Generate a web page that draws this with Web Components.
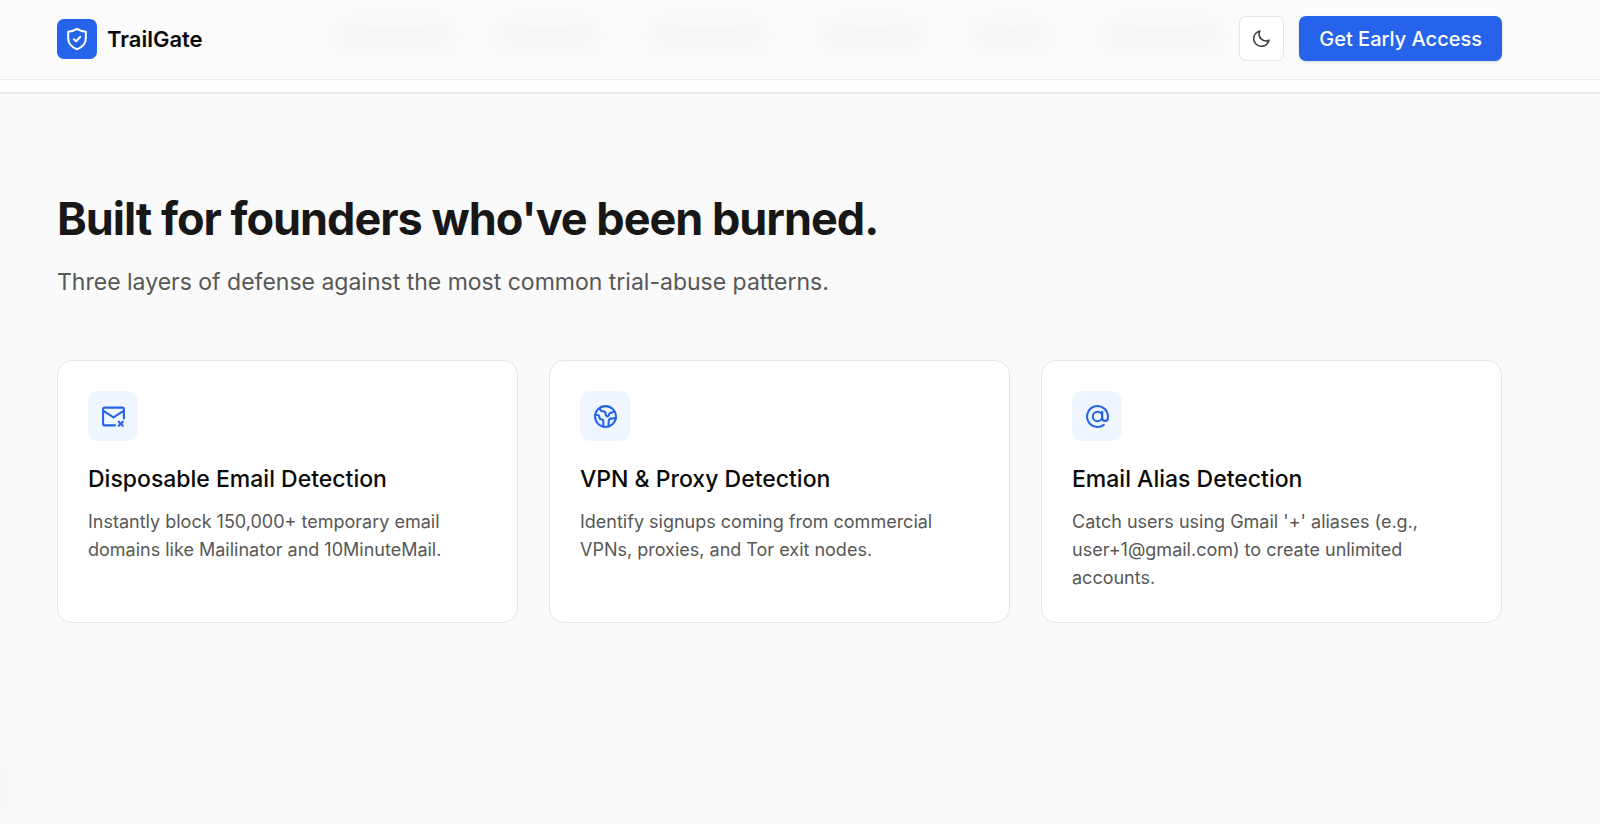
<!DOCTYPE html>
<html lang="en">
<head>
<meta charset="UTF-8">
<meta name="viewport" content="width=device-width, initial-scale=1">
<title>TrailGate</title>
<style>
  :root {
    --accent: #2563eb;
    --ink: #171717;
    --muted: #575757;
    --line: #e5e5e5;
    --page: #fafafa;
    --gutter-left: 57px;
    --gutter-right: 98px;
  }
  body {
    margin: 0;
    min-height: 100vh;
    background: radial-gradient(20px 44px at 0 96%, #f6f6f6, var(--page)) var(--page);
    color: var(--ink);
    font-family: Inter, "Liberation Sans", sans-serif;
  }
</style>
</head>
<body>
  <site-header>
    <span slot="brand">TrailGate</span>
    <span slot="action">Get Early Access</span>
  </site-header>

  <main>
    <feature-section>
      <span slot="heading">Built for founders who've been burned.</span>
      <span slot="lead">Three layers of defense against the most common trial-abuse patterns.</span>

      <feature-card icon="mail">
        <span slot="title">Disposable Email Detection</span>
        Instantly block 150,000+ temporary email domains like Mailinator and 10MinuteMail.
      </feature-card>
      <feature-card icon="globe">
        <span slot="title">VPN &amp; Proxy Detection</span>
        Identify signups coming from commercial VPNs, proxies, and Tor exit nodes.
      </feature-card>
      <feature-card icon="at">
        <span slot="title">Email Alias Detection</span>
        Catch users using Gmail '+' aliases (e.g., user+1@gmail.com) to create unlimited accounts.
      </feature-card>
    </feature-section>
  </main>

<script>
const icons = {
  shield: `
    <path d="M12 1.800C9.700 3.300 7 4.300 3.200 4.700V11.500C3.200 16.800 7.200 20.400 12 22.200C16.800 20.400 20.800 16.800 20.800 11.500V4.700C17 4.300 14.300 3.300 12 1.800Z"/>
    <path d="M8.800 12.300l2.300 2 4.200-4.500"/>`,
  moon: `
    <path d="M21.500 14.100A8.700 8.700 0 0 1 9.900 2.500 9.800 9.800 0 1 0 21.500 14.100Z"/>`,
  mail: `
    <path d="M22 14V5Q22 3.500 20.500 3.500H3.500Q2 3.500 2 5V19Q2 20.500 3.500 20.500H13.500"/>
    <path d="M2.300 6.500L12 12.800L21.700 6.500"/>
    <path d="M17 17l4 4M21 17l-4 4"/>`,
  globe: `
    <circle cx="12" cy="12" r="10"/>
    <path d="M6.500 4c.3 2.300 1.500 3 3 3 2 0 2.700 1 2.700 2.500 0 1.600.8 2.600 2 2.300 1.700-.4.500-2.300 2-3.100 1-.6 2.500-.2 4.300-1.500"/>
    <path d="M2 10.500h1.800c1.400 0 2.200.8 2.200 2 0 1.300.8 2 2 2.100 1.400.2 2 1 1.900 2.400V21.500"/>
    <path d="M21.800 13.800h-3.300c-2 0-3.500 1.300-3.500 3.200V21.500"/>`,
  at: `
    <circle cx="12" cy="12" r="4.500"/>
    <path d="M16.500 7.500V13.500a2.750 2.750 0 0 0 5.500 0V12A10 10 0 1 0 18 20"/>`
};

function icon(name, size) {
  return `<svg viewBox="0 0 24 24" width="${size}" height="${size}" fill="none" stroke="currentColor"
    stroke-width="2" stroke-linecap="round" stroke-linejoin="round" aria-hidden="true">${icons[name]}</svg>`;
}

class SiteHeader extends HTMLElement {
  constructor() {
    super();
    this.attachShadow({ mode: 'open' });
  }

  connectedCallback() {
    this.shadowRoot.innerHTML = `
      <style>
        :host {
          display: block;
          background: #fefefe;
          padding-bottom: 12px;
          border-bottom: 2px solid #ebebeb;
        }
        header {
          position: relative;
          display: flex;
          align-items: center;
          justify-content: space-between;
          padding: 16px var(--gutter-right) 18px var(--gutter-left);
          background: #fbfbfb;
          border-bottom: 1px solid #ebebeb;
        }
        .brand {
          display: flex;
          align-items: center;
          gap: 10px;
          color: #0a0a0a;
          font-size: 22px;
          font-weight: 600;
          text-decoration: none;
        }
        .mark {
          display: grid;
          place-items: center;
          width: 40px;
          height: 40px;
          border-radius: 7px;
          background: var(--accent);
          color: white;
        }
        .actions {
          display: flex;
          gap: 15px;
        }
        button {
          box-sizing: border-box;
          height: 45px;
          border-radius: 7px;
          font: inherit;
          cursor: pointer;
        }
        .theme {
          display: grid;
          place-items: center;
          width: 45px;
          padding: 0;
          border: 1px solid var(--line);
          background: white;
          color: #404040;
        }
        .cta {
          padding: 0 20px;
          border: 0;
          background: var(--accent);
          box-shadow: 0 1px 3px rgba(0, 0, 0, 0.15);
          color: white;
          font-size: 20px;
          font-weight: 500;
        }
        .frost {
          position: absolute;
          inset: 0;
          overflow: hidden;
          pointer-events: none;
        }
        .frost i {
          position: absolute;
          top: 26px;
          height: 18px;
          background: #f3f3f3;
          filter: blur(10px);
        }
        .brand, .actions { position: relative; }
      </style>
      <header>
        <div class="frost" aria-hidden="true">
          <i style="left: 340px; width: 108px"></i>
          <i style="left: 502px; width: 90px"></i>
          <i style="left: 656px; width: 104px"></i>
          <i style="left: 826px; width: 92px"></i>
          <i style="left: 978px; width: 64px"></i>
          <i style="left: 1108px; width: 108px"></i>
        </div>
        <a class="brand" href="#"><span class="mark">${icon('shield', 24)}</span><slot name="brand"></slot></a>
        <div class="actions">
          <button class="theme" type="button" aria-label="Switch to dark theme">${icon('moon', 19)}</button>
          <button class="cta" type="button"><slot name="action"></slot></button>
        </div>
      </header>
    `;
  }
}
customElements.define('site-header', SiteHeader);

class FeatureSection extends HTMLElement {
  constructor() {
    super();
    this.attachShadow({ mode: 'open' });
  }

  connectedCallback() {
    this.shadowRoot.innerHTML = `
      <style>
        :host {
          display: block;
          padding: 100px var(--gutter-right) 100px var(--gutter-left);
        }
        h2 {
          margin: 0 0 20px;
          font-size: 45px;
          font-weight: 700;
          line-height: 50px;
          letter-spacing: -1px;
        }
        p {
          margin: 0 0 60px;
          color: var(--muted);
          font-size: 23px;
          line-height: 36px;
        }
        .grid {
          display: grid;
          grid-template-columns: repeat(3, 1fr);
          gap: 31px;
        }
      </style>
      <section>
        <h2><slot name="heading"></slot></h2>
        <p><slot name="lead"></slot></p>
        <div class="grid"><slot></slot></div>
      </section>
    `;
  }
}
customElements.define('feature-section', FeatureSection);

class FeatureCard extends HTMLElement {
  constructor() {
    super();
    this.attachShadow({ mode: 'open' });
  }

  connectedCallback() {
    this.shadowRoot.innerHTML = `
      <style>
        :host {
          display: block;
          padding: 30px;
          border: 1px solid var(--line);
          border-radius: 15px;
          background: white;
        }
        .tile {
          display: grid;
          place-items: center;
          width: 50px;
          height: 50px;
          border-radius: 10px;
          background: #eff6ff;
          color: var(--accent);
        }
        h3 {
          margin: 23px 0 14px;
          color: #0a0a0a;
          font-size: 23px;
          font-weight: 500;
          line-height: 30px;
        }
        p {
          margin: 0;
          color: var(--muted);
          font-size: 18px;
          line-height: 28px;
        }
      </style>
      <div class="tile">${icon(this.getAttribute('icon'), 25)}</div>
      <h3><slot name="title"></slot></h3>
      <p><slot></slot></p>
    `;
  }
}
customElements.define('feature-card', FeatureCard);
</script>
</body>
</html>
